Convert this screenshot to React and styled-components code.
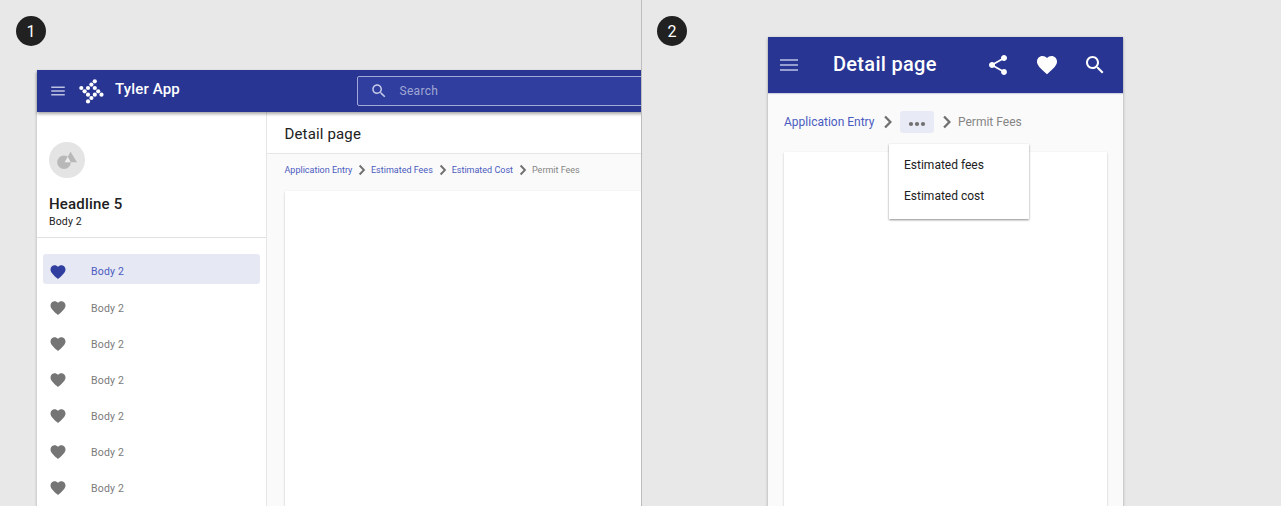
import React from 'react';
import styled, { createGlobalStyle } from 'styled-components';

const Global = createGlobalStyle`
  *, *::before, *::after { box-sizing: border-box; }
  body { margin: 0; background: #e8e8e8; font-family: Roboto, "Liberation Sans", sans-serif; overflow: hidden; }
  svg { display: block; flex: none; }
`;

const Page = styled.main`
  display: grid;
  grid-template-columns: 642px 639px;
  width: 1281px;
  height: 506px;
  overflow: hidden;
`;

const Example = styled.section`
  position: relative;
  overflow: hidden;
  padding: ${p => p.$pad};
  border-right: ${p => (p.$divided ? '1px solid #bdbdbd' : '0')};
`;

const StepBadge = styled.div`
  position: absolute;
  top: 16px;
  left: ${p => p.$left}px;
  width: 30px;
  height: 30px;
  border-radius: 50%;
  background: #212121;
  color: #fff;
  font-size: 16px;
  line-height: 31px;
  text-align: center;
`;

const DesktopApp = styled.div`
  display: flex;
  flex-direction: column;
  width: 620px;
  height: 460px;
  background: #fafafa;
  box-shadow: 0 2px 3px rgba(0, 0, 0, 0.25);
`;

const DesktopBar = styled.header`
  position: relative;
  display: flex;
  align-items: center;
  height: 42px;
  flex: none;
  padding-left: 12px;
  background: #283593;
  color: #fff;
  box-shadow: 0 2px 3px rgba(0, 0, 0, 0.35);
`;

const MenuSlot = styled.div`
  width: 30px;
  flex: none;
`;

const AppName = styled.div`
  width: 242px;
  flex: none;
  margin-left: 11px;
  padding-bottom: 4px;
  font-size: 15px;
  font-weight: 500;
  line-height: 20px;
  letter-spacing: 0.15px;
`;

const SearchField = styled.div`
  display: flex;
  align-items: center;
  gap: 12px;
  width: 320px;
  flex: none;
  height: 30px;
  padding-left: 11.5px;
  border: 1px solid #a3a9d6;
  border-radius: 2px;
  background: #303f9f;
  color: #a0a7d4;
  font-size: 12px;
  letter-spacing: 0.3px;
`;

const DesktopBody = styled.div`
  display: flex;
  flex: 1;
  min-height: 0;
`;

const Sidebar = styled.aside`
  width: 230px;
  flex: none;
  background: #fff;
  border-right: 1px solid #e6e6e6;
`;

const Profile = styled.div`
  height: 126px;
  padding: 30px 12px 0;
  border-bottom: 1px solid #e0e0e0;
  color: #212121;
`;

const Avatar = styled.div`
  width: 36px;
  height: 36px;
  border-radius: 50%;
  background: #e4e4e4;
`;

const Headline = styled.div`
  margin-top: 16px;
  font-size: 15px;
  font-weight: 500;
  line-height: 20px;
  letter-spacing: 0.2px;
`;

const Subline = styled.div`
  font-size: 10.5px;
  line-height: 16px;
  letter-spacing: 0.15px;
`;

const NavList = styled.nav`
  display: flex;
  flex-direction: column;
  gap: 6px;
  padding: 16px 6px 0;
`;

const NavItem = styled.div`
  display: flex;
  align-items: center;
  gap: 24px;
  height: 30px;
  padding: ${p => (p.$active ? '5px' : '6px')} 0 0 6px;
  border-radius: 3px;
  background: ${p => (p.$active ? '#e6e8f4' : 'transparent')};
  color: ${p => (p.$active ? '#4a5bc0' : '#7a7a7a')};
  font-size: 10.5px;
  letter-spacing: 0.2px;
  svg { color: ${p => (p.$active ? '#303f9f' : '#757575')}; }
`;

const Content = styled.div`
  flex: 1;
  display: flex;
  flex-direction: column;
`;

const TitleRow = styled.h1`
  margin: 0;
  height: 42px;
  padding-left: 17.5px;
  background: #fff;
  border-bottom: 1px solid #e6e6e6;
  color: #212121;
  font-size: 15px;
  font-weight: 400;
  line-height: 44px;
  letter-spacing: 0.15px;
`;

const Trail = styled.div`
  display: flex;
  align-items: center;
  height: ${p => p.$height}px;
  padding: ${p => p.$pad};
  font-size: ${p => p.$size}px;
`;

const Crumb = styled.span`
  flex: none;
  width: ${p => p.$width}px;
  color: ${p => (p.$current ? '#858585' : '#4a5bc0')};
  white-space: nowrap;
`;

const Sheet = styled.div`
  flex: 1;
  margin: ${p => p.$margin};
  background: #fff;
  box-shadow: 0 1px 2px rgba(0, 0, 0, 0.22);
`;

const MobileApp = styled.div`
  position: relative;
  display: flex;
  flex-direction: column;
  width: 355px;
  height: 490px;
  background: #fafafa;
  box-shadow: 0 1px 3px rgba(0, 0, 0, 0.3);
`;

const MobileBar = styled.header`
  display: flex;
  align-items: center;
  height: 56px;
  flex: none;
  padding-left: 9px;
  background: #283593;
  color: #fff;
  box-shadow: 0 1px 1px rgba(40, 53, 147, 0.2);
`;

const MobileTitle = styled.div`
  width: 153px;
  margin-left: 32px;
  padding-bottom: 2px;
  font-size: 20px;
  font-weight: 500;
  line-height: 24px;
  letter-spacing: 0.3px;
  white-space: nowrap;
`;

const Actions = styled.div`
  display: flex;
  gap: 24.5px;
`;

const MoreButton = styled.div`
  display: flex;
  align-items: center;
  justify-content: center;
  width: 34px;
  height: 22px;
  margin: 0 2px 0 1px;
  padding-top: 3px;
  border-radius: 3px;
  background: #e8eaf6;
`;

const Menu = styled.div`
  position: absolute;
  top: 107px;
  left: 121px;
  width: 140px;
  height: 75px;
  padding: 5px 15px;
  background: #fff;
  color: #212121;
  box-shadow: 0 1px 2px rgba(0, 0, 0, 0.45);
`;

const MenuItem = styled.div`
  height: 31px;
  font-size: 12px;
  line-height: 32px;
`;

const Icon = ({ size, d, color }) => (
  <svg width={size} height={size} viewBox="0 0 24 24" fill={color || 'currentColor'} aria-hidden="true">
    <path d={d} />
  </svg>
);

const HEART = 'M12 21.35l-1.45-1.32C5.4 15.36 2 12.28 2 8.5 2 5.42 4.42 3 7.5 3c1.74 0 3.41.81 4.5 2.09C13.09 3.81 14.76 3 16.5 3 19.58 3 22 5.42 22 8.5c0 3.78-3.4 6.86-8.55 11.54L12 21.35z';
const MENU = 'M3 18h18v-2H3v2zm0-5h18v-2H3v2zm0-7v2h18V6H3z';
const SEARCH = 'M15.5 14h-.79l-.28-.27C15.41 12.59 16 11.11 16 9.5 16 5.91 13.09 3 9.5 3S3 5.91 3 9.5 5.91 16 9.5 16c1.61 0 3.09-.59 4.23-1.57l.27.28v.79l5 4.99L20.49 19l-4.99-5zm-6 0C7.01 14 5 11.99 5 9.5S7.01 5 9.5 5 14 7.01 14 9.5 11.99 14 9.5 14z';
const SHARE = 'M18 16.08c-.76 0-1.44.3-1.96.77L8.91 12.7c.05-.23.09-.46.09-.7s-.04-.47-.09-.7l7.05-4.11c.54.5 1.25.81 2.04.81 1.66 0 3-1.34 3-3s-1.34-3-3-3-3 1.34-3 3c0 .24.04.47.09.7L8.04 9.81C7.5 9.31 6.79 9 6 9c-1.66 0-3 1.34-3 3s1.34 3 3 3c.79 0 1.5-.31 2.04-.81l7.12 4.16c-.05.21-.08.43-.08.65 0 1.61 1.31 2.92 2.92 2.92s2.92-1.31 2.92-2.92-1.31-2.92-2.92-2.92z';

const LOGO_DOTS = [
  [2.3, 9], [5.6, 12.3], [9, 9], [12.4, 5.6], [15.8, 2.3], [15.8, 9],
  [19.2, 12.3], [22.5, 15.7], [15.8, 15.7], [9, 15.7], [12.4, 19], [9, 22.4],
];

const Logo = () => (
  <svg width="25" height="25" viewBox="0 0 25 25" fill="#fff" aria-hidden="true">
    {LOGO_DOTS.map(([x, y]) => <circle key={`${x}-${y}`} cx={x} cy={y} r="2.1" />)}
  </svg>
);

const AvatarArt = () => (
  <svg width="36" height="36" viewBox="0 0 36 36" aria-hidden="true">
    <circle cx="15" cy="20.3" r="6.8" fill="#b8b8b8" />
    <path d="M21.6 9.8L28 20.3H15.6z" fill="#b8b8b8" />
    <path d="M18.8 14.7L21.7 20.3H15.6z" fill="#eeeeee" />
  </svg>
);

const Chevron = ({ size = 18 }) => (
  <svg width={size} height={size} viewBox="0 0 24 24" fill="none" stroke="#707070" strokeWidth="2.5" aria-hidden="true">
    <path d="M8.8 6l5.8 6-5.8 6" />
  </svg>
);

const Dots = () => (
  <svg width="18" height="6" viewBox="0 0 18 6" fill="#707070" aria-hidden="true">
    <circle cx="3" cy="3" r="2.1" />
    <circle cx="9" cy="3" r="2.1" />
    <circle cx="15" cy="3" r="2.1" />
  </svg>
);

export default function App() {
  return (
    <>
      <Global />
      <Page>
        <Example $divided $pad="70px 0 0 37px">
          <StepBadge $left={16}>1</StepBadge>
          <DesktopApp>
            <DesktopBar>
              <MenuSlot><Icon size={18} d={MENU} color="#bcc1e2" /></MenuSlot>
              <Logo />
              <AppName>Tyler App</AppName>
              <SearchField>
                <Icon size={18} d={SEARCH} color="#c4c9e8" />
                Search
              </SearchField>
            </DesktopBar>
            <DesktopBody>
              <Sidebar>
                <Profile>
                  <Avatar><AvatarArt /></Avatar>
                  <Headline>Headline 5</Headline>
                  <Subline>Body 2</Subline>
                </Profile>
                <NavList>
                  {[0, 1, 2, 3, 4, 5, 6].map(i => (
                    <NavItem key={i} $active={i === 0}>
                      <Icon size={18} d={HEART} />
                      Body 2
                    </NavItem>
                  ))}
                </NavList>
              </Sidebar>
              <Content>
                <TitleRow>Detail page</TitleRow>
                <Trail $height={32} $size={9} $pad="0 0 0 17.5px">
                  <Crumb $width={68.5}>Application Entry</Crumb>
                  <Chevron />
                  <Crumb $width={62.7}>Estimated Fees</Crumb>
                  <Chevron />
                  <Crumb $width={62.3}>Estimated Cost</Crumb>
                  <Chevron />
                  <Crumb $width={60} $current>Permit Fees</Crumb>
                </Trail>
                <Sheet $margin="5px 0 0 17.5px" />
              </Content>
            </DesktopBody>
          </DesktopApp>
        </Example>
        <Example $pad="37px 0 0 126px">
          <StepBadge $left={15}>2</StepBadge>
          <MobileApp>
            <MobileBar>
              <Icon size={24} d={MENU} color="#979fd0" />
              <MobileTitle>Detail page</MobileTitle>
              <Actions>
                <Icon size={24} d={SHARE} />
                <Icon size={24} d={HEART} />
                <Icon size={24} d={SEARCH} />
              </Actions>
            </MobileBar>
            <Trail $height={58} $size={12} $pad="0 0 0 16px">
              <Crumb $width={93}>Application Entry</Crumb>
              <Chevron size={22} />
              <MoreButton><Dots /></MoreButton>
              <Chevron size={22} />
              <Crumb $width={70} $current>Permit Fees</Crumb>
            </Trail>
            <Sheet $margin="1px 16px 0" />
            <Menu>
              <MenuItem>Estimated fees</MenuItem>
              <MenuItem>Estimated cost</MenuItem>
            </Menu>
          </MobileApp>
        </Example>
      </Page>
    </>
  );
}
